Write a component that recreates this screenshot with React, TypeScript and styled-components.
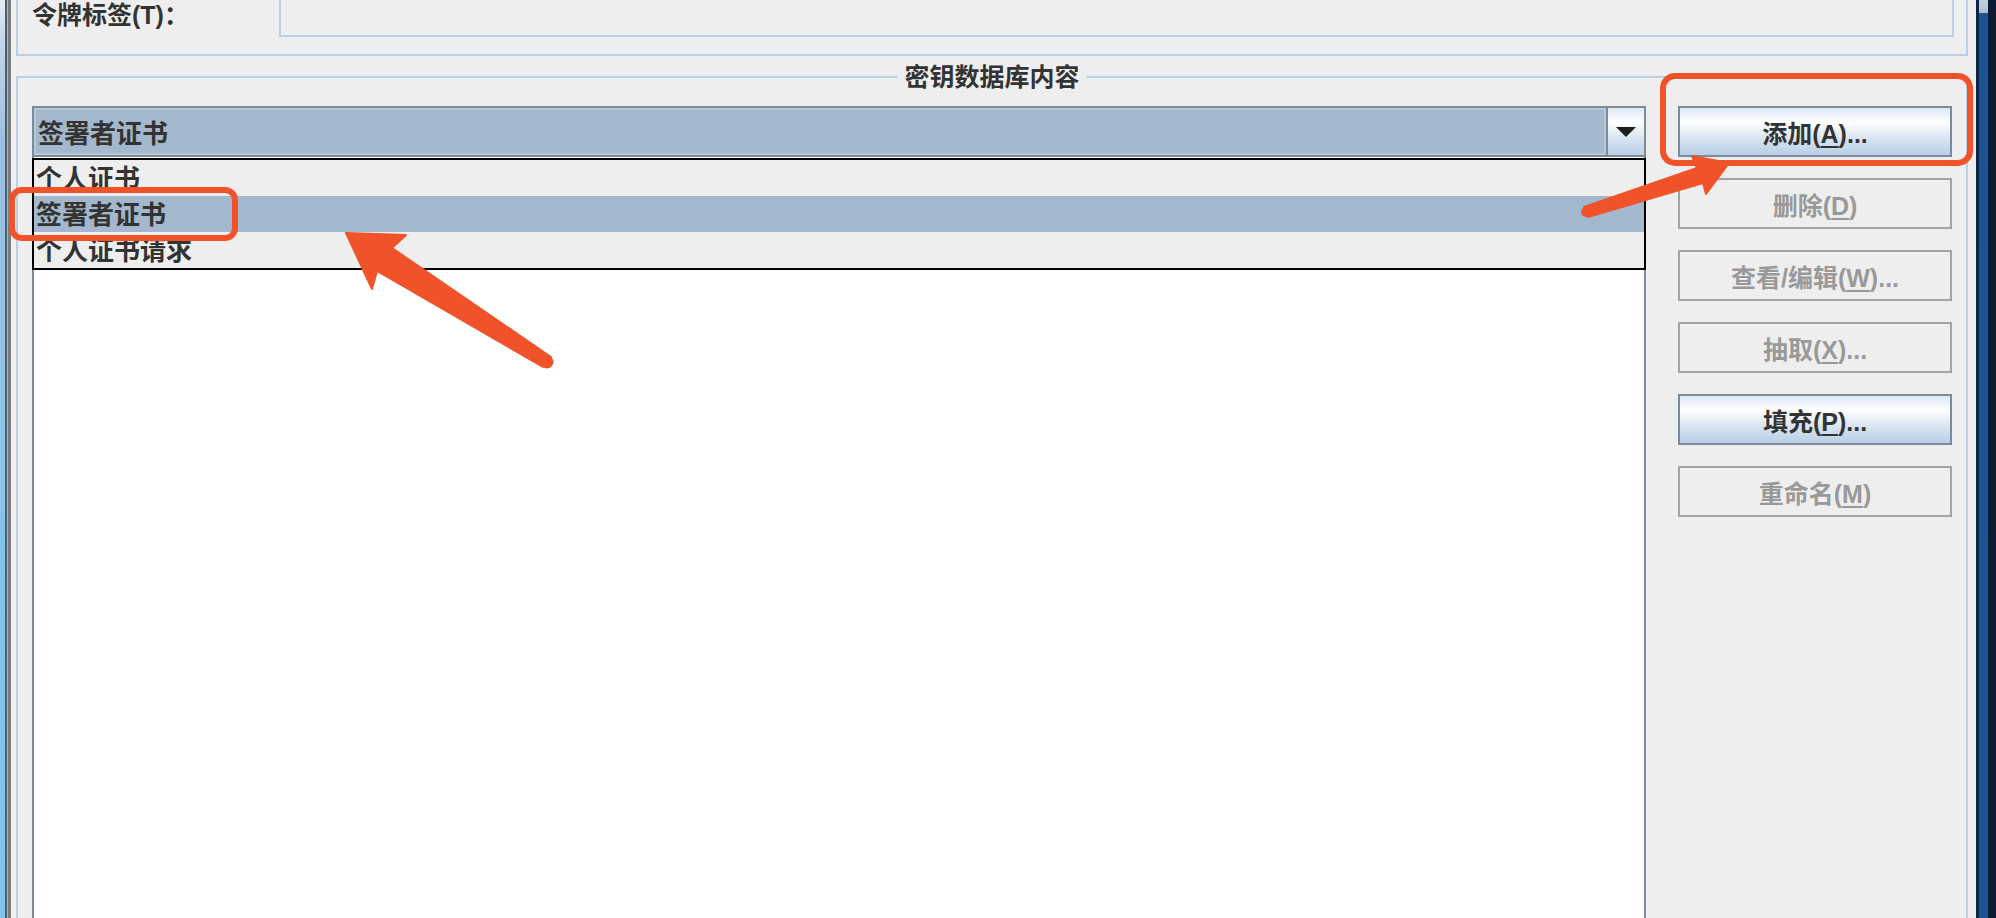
import React from 'react';
import styled, { createGlobalStyle } from 'styled-components';

const GlobalStyle = createGlobalStyle`
  html, body {
    margin: 0;
    padding: 0;
    background: #eeeeee;
    overflow: hidden;
  }
`;

const FONT = `"Liberation Sans", "Noto Sans CJK SC", sans-serif`;
const ORANGE = '#f0532a';

const Screen = styled.div`
  position: relative;
  display: flex;
  width: 1996px;
  height: 918px;
  overflow: hidden;
  background: #eeeeee;
  font-family: ${FONT};
  color: #333333;
`;

const LeftFrame = styled.div`
  display: flex;
  width: 11px;
  flex-shrink: 0;
`;

const Glass = styled.div`
  width: 5px;
  background: linear-gradient(to bottom, #e4edf6 0, #c4d6e8 40px, #9dc0e0 140px, #86c4ea 60%, #80c6ee 100%);
`;

const FrameEdge = styled.div`
  width: 6px;
  background: linear-gradient(to right, #4c5f70 0 2px, #b4b4b4 2px 3px, #7c7c7c 3px 6px);
`;

const RightFrame = styled.div`
  display: flex;
  width: 20px;
  flex-shrink: 0;
  border-left: 3px solid #0d2646;
  border-right: 8px solid #0b1d35;
  box-sizing: border-box;
  background: linear-gradient(to bottom, #c3d2e0 0, #aebfd0 13px, #1c5392 13px, #1b5596 100%);
`;

const Dialog = styled.div`
  flex: 1;
  min-width: 0;
  display: flex;
  flex-direction: column;
  padding: 0 8px 0 5px;
`;

const TopPanel = styled.div`
  display: flex;
  align-items: flex-start;
  flex-shrink: 0;
  height: 56px;
  box-sizing: border-box;
  border: 2px solid #b8cfe5;
  border-top: none;
  padding: 0 12px 0 14px;
`;

const FieldLabel = styled.div`
  width: 247px;
  flex-shrink: 0;
  font-size: 25px;
  font-weight: bold;
  line-height: 30px;
`;

const TokenField = styled.div`
  flex: 1;
  height: 37px;
  box-sizing: border-box;
  border: 2px solid #b8cfe5;
  border-top: none;
`;

const ContentPanel = styled.section`
  position: relative;
  flex-shrink: 0;
  margin-top: 20px;
  padding: 28px 14px 0 14px;
  border: 2px solid #b8cfe5;
  height: 1000px;
`;

const PanelTitle = styled.h2`
  position: absolute;
  top: -16px;
  left: 50%;
  transform: translateX(-50%);
  margin: 0;
  padding: 0 7px;
  background: #eeeeee;
  font-size: 25px;
  font-weight: bold;
  line-height: 30px;
  white-space: nowrap;
`;

const PanelBody = styled.div`
  display: flex;
  gap: 32px;
`;

const LeftColumn = styled.div`
  flex: 1;
  min-width: 0;
  display: flex;
  flex-direction: column;
`;

const Combo = styled.div`
  display: flex;
  height: 51px;
  box-sizing: border-box;
  border: 2px solid #7d8b99;
`;

const ComboValue = styled.div`
  flex: 1;
  display: flex;
  align-items: center;
  padding-left: 2px;
  background: #a3b8cc;
  border: 2px solid #b5c7da;
  font-size: 26px;
  font-weight: bold;
`;

const ComboArrow = styled.div`
  width: 38px;
  box-sizing: border-box;
  border-left: 2px solid #7d8b99;
  display: flex;
  align-items: center;
  justify-content: center;
  background: linear-gradient(to bottom, #dde8f3 0%, #ffffff 30%, #dde8f3 60%, #b8cfe5 100%);

  &::after {
    content: '';
    width: 0;
    height: 0;
    border-left: 10px solid transparent;
    border-right: 10px solid transparent;
    border-top: 10px solid #1e1e1e;
  }
`;

const ListArea = styled.div`
  position: relative;
  height: 800px;
  background: #ffffff;
  border-left: 2px solid #7d8b99;
  border-right: 2px solid #7d8b99;
`;

const Popup = styled.div`
  position: absolute;
  top: 1px;
  left: -2px;
  right: -2px;
  border: 2px solid #000000;
  background: #eeeeee;
`;

const PopupItem = styled.div<{ $selected?: boolean }>`
  height: 36px;
  line-height: 38px;
  padding-left: 2px;
  font-size: 26px;
  font-weight: bold;
  background: ${({ $selected }) => ($selected ? '#a3b8cc' : '#eeeeee')};
`;

const ButtonColumn = styled.div`
  width: 274px;
  flex-shrink: 0;
  display: flex;
  flex-direction: column;
  gap: 21px;
`;

const ActionButton = styled.button`
  height: 51px;
  box-sizing: border-box;
  padding: 0;
  border: 2px solid #7a8a99;
  background: linear-gradient(to bottom, #dde8f3 0%, #ffffff 30%, #dde8f3 60%, #b8cfe5 100%);
  font-family: ${FONT};
  font-size: 25px;
  font-weight: bold;
  color: #333333;

  &:disabled {
    border-color: #a3a3a3;
    background: #eeeeee;
    color: #999999;
  }
`;

const Mnemonic = styled.span`
  text-decoration: underline;
  text-underline-offset: 3px;
  text-decoration-thickness: 2px;
`;

const Overlay = styled.svg`
  position: absolute;
  top: 0;
  left: 0;
  pointer-events: none;
`;

const buttons = [
  { label: '添加', key: 'A', dots: true, enabled: true },
  { label: '删除', key: 'D', dots: false, enabled: false },
  { label: '查看/编辑', key: 'W', dots: true, enabled: false },
  { label: '抽取', key: 'X', dots: true, enabled: false },
  { label: '填充', key: 'P', dots: true, enabled: true },
  { label: '重命名', key: 'M', dots: false, enabled: false },
];

const items = ['个人证书', '签署者证书', '个人证书请求'];

const App = () => {
  return (
    <>
      <GlobalStyle />
      <Screen>
        <LeftFrame>
          <Glass />
          <FrameEdge />
        </LeftFrame>

        <Dialog>
          <TopPanel>
            <FieldLabel>令牌标签(T)：</FieldLabel>
            <TokenField />
          </TopPanel>

          <ContentPanel>
            <PanelTitle>密钥数据库内容</PanelTitle>
            <PanelBody>
              <LeftColumn>
                <Combo>
                  <ComboValue>签署者证书</ComboValue>
                  <ComboArrow />
                </Combo>
                <ListArea>
                  <Popup>
                    {items.map((item, i) => (
                      <PopupItem key={item} $selected={i === 1}>
                        {item}
                      </PopupItem>
                    ))}
                  </Popup>
                </ListArea>
              </LeftColumn>

              <ButtonColumn>
                {buttons.map((b) => (
                  <ActionButton key={b.key} disabled={!b.enabled}>
                    {b.label}(<Mnemonic>{b.key}</Mnemonic>){b.dots ? '...' : ''}
                  </ActionButton>
                ))}
              </ButtonColumn>
            </PanelBody>
          </ContentPanel>
        </Dialog>

        <RightFrame />

        <Overlay width="1996" height="918" viewBox="0 0 1996 918">
          <rect x="1663" y="76" width="307" height="87" rx="12" fill="none" stroke={ORANGE} strokeWidth="6" />
          <rect x="12" y="190" width="223" height="48" rx="10" fill="none" stroke={ORANGE} strokeWidth="6" />
          <polygon
            points="346,233 406,235 392,248 551,357 543,367 377,271 372,289"
            fill={ORANGE}
            stroke={ORANGE}
            strokeWidth="2"
            strokeLinejoin="round"
          />
          <circle cx="547" cy="362" r="6.5" fill={ORANGE} />
          <polygon
            points="1729,163 1692,156 1697,168 1584,207 1588,217 1703,183 1706,194"
            fill={ORANGE}
            stroke={ORANGE}
            strokeWidth="2"
            strokeLinejoin="round"
          />
          <circle cx="1586" cy="212" r="5" fill={ORANGE} />
        </Overlay>
      </Screen>
    </>
  );
};

export default App;
